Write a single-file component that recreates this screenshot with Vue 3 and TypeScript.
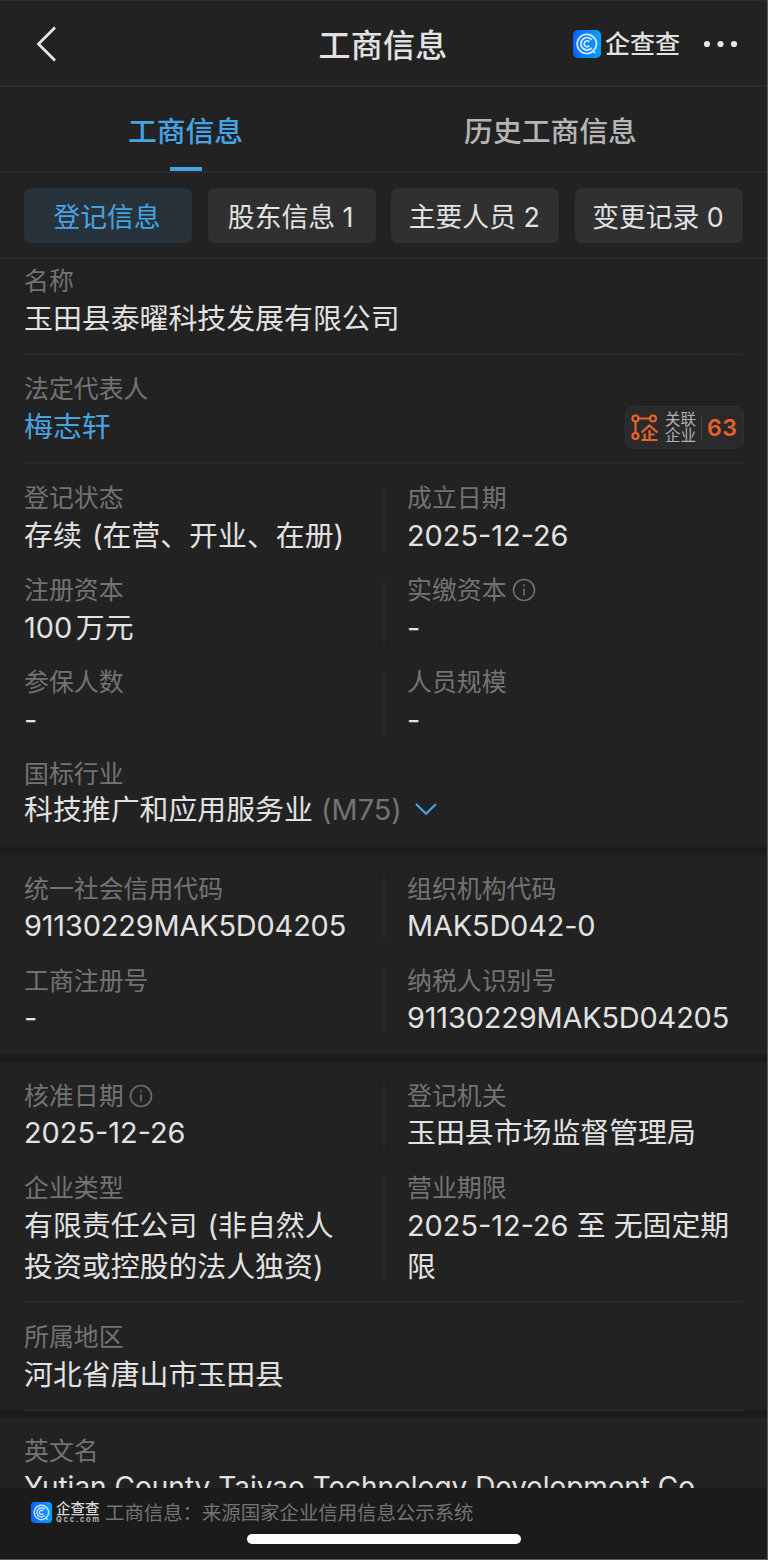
<script setup lang="ts">
interface Field {
  label: string
  value: string
  info?: boolean
}

const chips: string[] = ['登记信息', '股东信息 1', '主要人员 2', '变更记录 0']

const statusRows: Field[][] = [
  [
    { label: '登记状态', value: '存续 (在营、开业、在册)' },
    { label: '成立日期', value: '2025-12-26' },
  ],
  [
    { label: '注册资本', value: '100万元' },
    { label: '实缴资本', value: '-', info: true },
  ],
  [
    { label: '参保人数', value: '-' },
    { label: '人员规模', value: '-' },
  ],
]

const codeRows: Field[][] = [
  [
    { label: '统一社会信用代码', value: '91130229MAK5D04205' },
    { label: '组织机构代码', value: 'MAK5D042-0' },
  ],
  [
    { label: '工商注册号', value: '-' },
    { label: '纳税人识别号', value: '91130229MAK5D04205' },
  ],
]

const registryRows: Field[][] = [
  [
    { label: '核准日期', value: '2025-12-26', info: true },
    { label: '登记机关', value: '玉田县市场监督管理局' },
  ],
  [
    { label: '企业类型', value: '有限责任公司 (非自然人\n投资或控股的法人独资)' },
    { label: '营业期限', value: '2025-12-26 至 无固定期\n限' },
  ],
]

const groups: { name: string; rows: Field[][] }[] = [
  { name: 'status', rows: statusRows },
  { name: 'codes', rows: codeRows },
  { name: 'registry', rows: registryRows },
]
</script>

<template>
  <div class="page">
    <header class="bar">
      <svg class="back" width="24" height="40" viewBox="0 0 24 40">
        <path d="M21 3.5 4.500 20l16.500 16.500" />
      </svg>
      <h1>工商信息</h1>
      <div class="brand">
        <svg class="logo" viewBox="0 0 28 28">
          <defs>
            <linearGradient id="qa" x1="0" x2="1"><stop offset="0" stop-color="#0a63ff" /><stop offset="1" stop-color="#05a2ff" /></linearGradient>
          </defs>
          <rect width="28" height="28" rx="5" fill="url(#qa)" />
          <g class="rings">
            <path d="M19.500 21.700A9.600 9.600 0 1 1 23.300 15.500Q22.700 19 20 21L22.200 23.200" />
            <path d="M18.800 17.800A6.200 6.200 0 1 1 18.800 9.800" />
            <path d="M16.300 15.700A2.900 2.900 0 1 1 16.300 11.900" />
          </g>
        </svg>
        <span class="brand-name">企查查</span>
      </div>
      <svg class="dots" width="36" height="8" viewBox="0 0 36 8">
        <circle cx="4" cy="4" r="3.100" /><circle cx="17.500" cy="4" r="3.100" /><circle cx="31" cy="4" r="3.100" />
      </svg>
    </header>

    <nav class="tabs">
      <span class="tab active">工商信息</span>
      <span class="tab">历史工商信息</span>
    </nav>

    <div class="chips">
      <span v-for="(c, i) in chips" :key="c" class="chip" :class="{ on: i === 0 }">{{ c }}</span>
    </div>

    <main>
      <section class="single name">
        <div class="label">名称</div>
        <div class="value">玉田县泰曜科技发展有限公司</div>
      </section>

      <section class="single person">
        <div>
          <div class="label">法定代表人</div>
          <div class="value link">梅志轩</div>
        </div>
        <div class="related">
          <svg class="graph" width="28" height="28" viewBox="0 0 28 28">
            <circle cx="4.500" cy="4.500" r="3" /><circle cx="22" cy="4.500" r="3" /><circle cx="4.500" cy="22" r="3" />
            <path d="M7.500 4.500H19M4.500 7.500V19" />
            <path d="M10.500 18.500 18.500 11.500 26.500 18.500M18.500 16V25.500M18.500 20.500H23.500M13.700 19.500V25.500M10.500 26H26.500" />
          </svg>
          <span class="related-text"><span>关联</span><span>企业</span></span>
          <i class="rule"></i>
          <b>63</b>
        </div>
      </section>

      <template v-for="g in groups" :key="g.name">
        <section class="group" :class="g.name">
          <div v-for="(row, r) in g.rows" :key="r" class="row">
            <div v-for="f in row" :key="f.label" class="cell">
              <div class="label">
                {{ f.label }}<svg v-if="f.info" class="info" width="24" height="24" viewBox="0 0 24 24">
                  <circle cx="12" cy="12" r="10.500" />
                  <path d="M12 10.500V17.500" />
                  <path d="M12 6.300V8.300" />
                </svg>
              </div>
              <div class="value" :class="{ paren: f.value.includes('(') }">{{ f.value }}</div>
            </div>
          </div>
          <div v-if="g.name === 'status'" class="industry">
            <div class="label">国标行业</div>
            <div class="value">
              科技推广和应用服务业 <span class="code">(M75)</span>
              <svg class="chev" width="24" height="14" viewBox="0 0 24 14"><path d="M2 2 12 11.800 22 2" /></svg>
            </div>
          </div>
          <div v-if="g.name === 'registry'" class="area">
            <div class="label">所属地区</div>
            <div class="value">河北省唐山市玉田县</div>
          </div>
        </section>
      </template>

      <section class="english">
        <div class="label">英文名</div>
        <div class="value">Yutian County Taiyao Technology Development Co</div>
      </section>
    </main>

    <footer>
      <div class="source">
        <svg class="logo" viewBox="0 0 28 28">
          <defs>
            <linearGradient id="qb" x1="0" x2="1"><stop offset="0" stop-color="#0a63ff" /><stop offset="1" stop-color="#05a2ff" /></linearGradient>
          </defs>
          <rect width="28" height="28" rx="5" fill="url(#qb)" />
          <g class="rings">
            <path d="M19.500 21.700A9.600 9.600 0 1 1 23.300 15.500Q22.700 19 20 21L22.200 23.200" />
            <path d="M18.800 17.800A6.200 6.200 0 1 1 18.800 9.800" />
            <path d="M16.300 15.700A2.900 2.900 0 1 1 16.300 11.900" />
          </g>
        </svg>
        <span class="mini"><b>企查查</b><small>Qcc.com</small></span>
        <span class="note">工商信息：来源国家企业信用信息公示系统</span>
      </div>
      <div class="home"></div>
    </footer>
  </div>
</template>

<style>
body {
  background: #222;
}
</style>

<style scoped>
.page {
  box-sizing: border-box;
  width: 768px;
  height: 1560px;
  overflow: hidden;
  display: flex;
  flex-direction: column;
  background: #222;
  border-right: 1px solid #5a5a5a;
  border-bottom: 1px solid #5a5a5a;
  color: #e2e2e2;
  font-family: Inter, "Noto Sans CJK SC", sans-serif;
  text-autospace: normal;
}
.bar {
  box-sizing: border-box;
  height: 87px;
  flex: none;
  display: grid;
  grid-template-columns: 250px 266px 1fr 64px;
  align-items: center;
  padding-top: 1px;
  border-top: 1px solid #2b2b2b;
  border-bottom: 2px solid #2c2c2c;
}
.back {
  margin-left: 34px;
}
.back path {
  fill: none;
  stroke: #e6e6e6;
  stroke-width: 2.8;
}
h1 {
  margin: 4px 0 0;
  text-align: center;
  font-size: 32px;
  line-height: 44px;
  font-weight: 500;
  letter-spacing: 0.3px;
}
.brand {
  display: flex;
  align-items: center;
  margin-left: 57px;
  gap: 4px;
}
.logo {
  width: 28px;
  height: 28px;
  flex: none;
}
.rings path {
  fill: none;
  stroke: #cfe6ff;
  stroke-width: 1.9;
}
.brand-name {
  font-size: 25px;
  line-height: 30px;
  font-weight: 500;
  white-space: nowrap;
}
.dots {
  fill: #e6e6e6;
}
.tabs {
  box-sizing: border-box;
  height: 86px;
  flex: none;
  display: grid;
  grid-template-columns: 371px 1fr;
  border-bottom: 2px solid #2b2b2b;
}
.tab {
  position: relative;
  text-align: center;
  font-size: 28.800px;
  line-height: 89px;
  height: 84px;
  color: #b5b5b5;
  font-weight: 500;
  padding-right: 37px;
}
.tab.active {
  padding: 0;
  color: #46a3e4;
}
.tab.active::after {
  content: "";
  position: absolute;
  left: 170px;
  bottom: 0;
  width: 32px;
  height: 4px;
  background: #46a3e4;
}
.chips {
  box-sizing: border-box;
  height: 86px;
  flex: none;
  display: grid;
  grid-template-columns: repeat(4, 1fr);
  gap: 15.600px;
  padding: 15px 24px 14px;
  border-bottom: 2px solid #2a2a2a;
}
.chip {
  box-sizing: border-box;
  padding-right: 2px;
  border-radius: 7px;
  background: #303030;
  text-align: center;
  font-size: 26.800px;
  line-height: 58px;
  height: 55px;
  white-space: nowrap;
}
.chip.on {
  background: #28323b;
  color: #46a3e4;
}
main {
  flex: 1;
  min-height: 0;
  overflow: hidden;
}
.label {
  box-sizing: border-box;
  display: flex;
  align-items: center;
  height: 36px;
  padding-top: 1px;
  font-size: 24.900px;
  line-height: 35px;
  color: #737373;
}
.codes .label,
.registry .label {
  padding-top: 2px;
  line-height: 34px;
}
.value {
  margin: -1px 0 1px;
  font-size: 28.900px;
  line-height: 41px;
  white-space: pre-line;
}
.paren {
  word-spacing: 2px;
}
.codes .value {
  letter-spacing: -0.15px;
}
.single {
  margin: 0 24px;
  border-bottom: 2px solid #292929;
  box-sizing: border-box;
}
.name {
  height: 96px;
  padding-top: 4px;
}
.person {
  height: 109px;
  padding-top: 16px;
  display: flex;
  justify-content: space-between;
}
.link {
  color: #46a3e4;
}
.related {
  box-sizing: border-box;
  margin-top: 35px;
  margin-right: -1px;
  width: 119px;
  height: 43px;
  border: 1px solid #303030;
  border-radius: 8px;
  background: #2a2a2a;
  display: flex;
  align-items: center;
  padding-left: 5px;
}
.graph {
  flex: none;
  fill: none;
  stroke: #e9622c;
  stroke-width: 2.2;
}
.related-text {
  display: flex;
  flex-direction: column;
  margin-left: 6px;
  font-size: 15.500px;
  line-height: 16px;
  color: #b0b0b0;
}
.rule {
  width: 1px;
  height: 24px;
  margin: 0 5px;
  background: #484848;
}
.related b {
  color: #e9622c;
  font-size: 23px;
  font-weight: 600;
  letter-spacing: 0.5px;
}
.group {
  border-bottom: 8px solid #1b1b1b;
  padding: 15px 24px 0;
  box-sizing: border-box;
}
.status {
  height: 391px;
  padding-top: 16px;
}
.codes {
  height: 207px;
}
.registry {
  height: 356px;
}
.row {
  display: grid;
  grid-template-columns: 360px 1fr;
  margin-bottom: 15px;
}
.registry .row:nth-child(2) {
  margin-bottom: 14px;
}
.registry .row:nth-child(2) .value,
.area .value {
  margin: 0;
}
.cell {
  white-space: nowrap;
}
.cell + .cell {
  position: relative;
  padding-left: 23px;
}
.cell + .cell::before {
  content: "";
  position: absolute;
  left: -1px;
  top: 6px;
  bottom: 5px;
  width: 2px;
  background: #292929;
}
.info {
  margin: -1px 0 0 5px;
  fill: none;
  stroke: #6c6c6c;
  stroke-width: 1.7;
}
.industry .value {
  margin: 0;
  line-height: 36px;
}
.code {
  color: #737373;
}
.chev {
  fill: none;
  stroke: #46a3e4;
  stroke-width: 2.2;
  margin-left: 12px;
  vertical-align: 4px;
}
.area {
  border-top: 2px solid #292929;
  border-bottom: 2px solid #292929;
  padding: 15px 0 14px;
}
.english {
  padding: 15px 24px 0;
}
.english .value {
  margin-top: -2px;
  font-size: 28px;
  white-space: nowrap;
}
footer {
  height: 71px;
  flex: none;
  background: #1b1b1b;
}
.source {
  display: flex;
  align-items: center;
  height: 48px;
  padding-left: 31px;
}
.source .logo {
  width: 21px;
  height: 21px;
}
.mini {
  display: flex;
  flex-direction: column;
  margin: 0 5px 0 4px;
  width: 44px;
}
.mini b {
  font-size: 14.500px;
  line-height: 14px;
  font-weight: 500;
  color: #d8d8d8;
}
.mini small {
  font-size: 7.500px;
  line-height: 7px;
  font-weight: 700;
  letter-spacing: 1.700px;
  color: #b5b5b5;
}
.note {
  margin-top: 2px;
  font-size: 19.400px;
  line-height: 28px;
  color: #737373;
}
.home {
  margin: -2px auto 0 247px;
  width: 274px;
  height: 10px;
  border-radius: 5px;
  background: #fff;
}
</style>
